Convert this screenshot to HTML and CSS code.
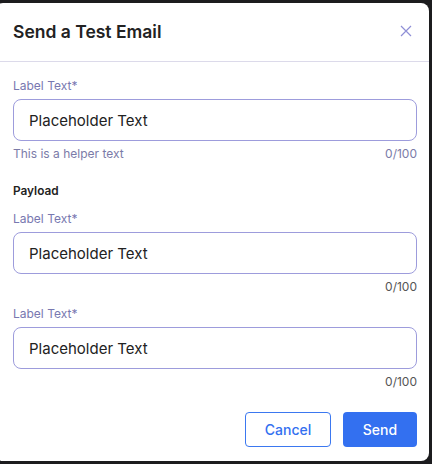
FILE: index.html
```html
<!DOCTYPE html>
<html lang="en">
<head>
    <meta charset="UTF-8">
    <meta name="viewport" content="width=device-width, initial-scale=1.0">
    <title>Send a Test Email</title>
    <link rel="stylesheet" href="styles.css">
</head>
<body>
    <div class="modal">
        <div class="modal-header">
            <h2>Send a Test Email</h2>
            <button class="close-btn" type="button" aria-label="Close">
                <svg width="12" height="12" viewBox="0 0 12 12">
                    <path d="M1 1L11 11M11 1L1 11" stroke="#8f8fd6" stroke-width="1.2" fill="none"/>
                </svg>
            </button>
        </div>
        <form class="modal-body">
            <div class="form-group">
                <label for="subject">Label Text*</label>
                <input type="text" id="subject" placeholder="Placeholder Text">
                <div class="field-foot helper">
                    <span>This is a helper text</span>
                    <span>0/100</span>
                </div>
            </div>

            <div class="section-title">Payload</div>

            <div class="form-group">
                <label for="payload1">Label Text*</label>
                <input type="text" id="payload1" placeholder="Placeholder Text">
                <div class="field-foot">
                    <span></span>
                    <span>0/100</span>
                </div>
            </div>

            <div class="form-group last">
                <label for="payload2">Label Text*</label>
                <input type="text" id="payload2" placeholder="Placeholder Text">
                <div class="field-foot">
                    <span></span>
                    <span>0/100</span>
                </div>
            </div>

            <div class="actions">
                <button type="button" class="btn btn-outline">Cancel</button>
                <button type="submit" class="btn btn-primary">Send</button>
            </div>
        </form>
    </div>
</body>
</html>
```

FILE: styles.css
```css
* {
    box-sizing: border-box;
}
body {
    margin: 0;
    background-color: #1c1c1e;
    font-family: Inter, "Noto Sans", Arial, sans-serif;
    height: 464px;
    overflow: hidden;
}
.modal {
    background-color: #fff;
    margin: 3px 3px 0 -5px;
    height: 458px;
    border-radius: 8px;
}
.modal-header {
    height: 59px;
    display: flex;
    align-items: center;
    justify-content: space-between;
    padding: 0 17px 0 18px;
    border-bottom: 1px solid #dcdaea;
}
.modal-header h2 {
    margin: 0 0 2px;
    font-size: 17.5px;
    font-weight: 600;
    color: #222;
}
.close-btn {
    background: none;
    border: none;
    padding: 0;
    width: 12px;
    height: 12px;
    margin-bottom: 2px;
    cursor: pointer;
    display: flex;
}
.modal-body {
    padding: 16px 12px 0 18px;
}
.form-group label {
    display: block;
    font-size: 12px;
    line-height: 16px;
    color: #7878b0;
    margin-bottom: 5px;
}
.form-group input {
    width: 100%;
    height: 42px;
    padding: 0 15px;
    border: 1px solid #9d9cdc;
    border-radius: 8px;
    font-family: inherit;
    font-size: 15px;
    color: #222;
}
.form-group input::placeholder {
    color: #222;
}
.form-group input:focus {
    outline: none;
    border-color: #3370f0;
}
.field-foot {
    display: flex;
    justify-content: space-between;
    font-size: 12px;
    line-height: 14px;
    color: #555;
    margin-top: 6px;
}
.field-foot.helper {
    color: #7b7ba8;
}
.form-group {
    margin-bottom: 12px;
}
.form-group:first-child {
    margin-bottom: 22px;
}
.form-group.last {
    margin-bottom: 23px;
}
.section-title {
    font-size: 11.8px;
    font-weight: 600;
    line-height: 16px;
    color: #222;
    margin-bottom: 12px;
}
.actions {
    display: flex;
    justify-content: flex-end;
    gap: 12px;
}
.btn {
    height: 35px;
    border-radius: 4px;
    font-family: inherit;
    font-size: 14px;
    font-weight: 500;
    cursor: pointer;
}
.btn-outline {
    width: 86px;
    background-color: #fff;
    color: #3370f0;
    border: 1px solid #3b78f0;
}
.btn-primary {
    width: 74px;
    background-color: #3370f0;
    color: #fff;
    border: none;
}
.btn-primary:hover {
    background-color: #2a62d8;
}
```
